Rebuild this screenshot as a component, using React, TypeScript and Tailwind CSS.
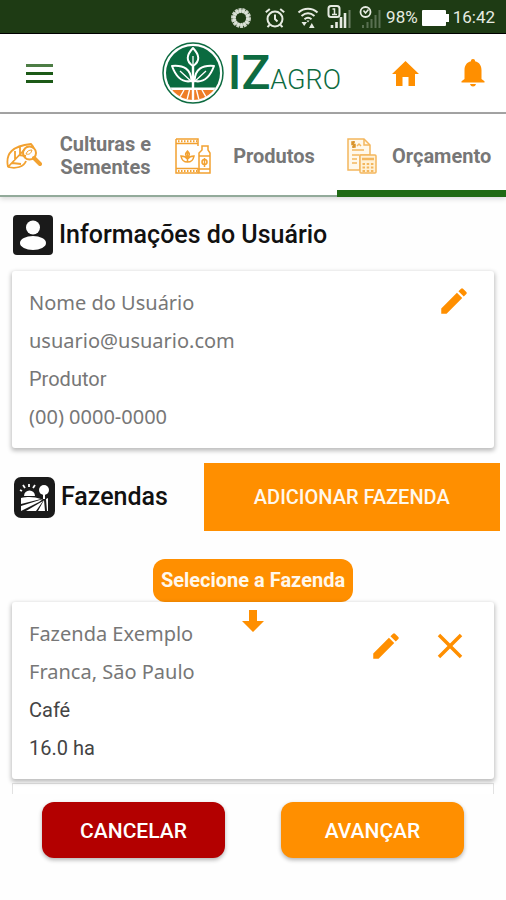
import React from "react";
import { MdEdit, MdClose } from "react-icons/md";

function StatusBar() {
  return (
    <div className="flex h-[34px] items-center justify-end border-b border-black bg-[#1e3b14] pt-[2px] pr-[11px] text-[#e6ebe2]">
      <svg className="mr-[10px] size-6" viewBox="0 0 24 24" fill="none" stroke="currentColor">
        <circle cx="12" cy="12" r="7.5" strokeWidth="5" strokeDasharray="2.6 0.7" opacity="0.85" />
        <circle cx="12" cy="12" r="7" strokeWidth="3" opacity="0.7" />
      </svg>
      <svg className="mr-[10px] size-6" viewBox="0 0 24 24" fill="none" stroke="currentColor" strokeWidth="2">
        <circle cx="12" cy="13" r="7.5" />
        <path d="M12 8.5V13l2.5 2.5M2.8 6.2l4-3.3M21.2 6.2l-4-3.3M6.5 19l-2 2.2M17.500 19l2 2.200" />
      </svg>
      <svg className="mr-2 h-6 w-[22px]" viewBox="0 0 22 24" fill="none" stroke="currentColor" strokeWidth="2">
        <path d="M1.500 6.500C7 1.500 15 1.500 20.500 6.500M4.500 10c4-3.400 9-3.400 13 0M7.500 13.200c2.200-1.800 4.800-1.800 7 0" />
        <path d="M4.500 16h5.500l-2.800 4zM12 22l2.800-5 2.800 5zM9.500 14.500h3L11 16.500z" fill="currentColor" stroke="none" />
      </svg>
      <svg className="mr-2 h-[26px] w-6" viewBox="0 0 24 26" fill="none" stroke="currentColor">
        <rect x="1.500" y="1" width="11" height="11" rx="2.500" strokeWidth="2" />
        <path d="M5.500 4h2v5M5 9.500h5" strokeWidth="1.500" />
        <path d="M5 23v-3M9.500 23v-6M14 23V12M18 23V8" strokeWidth="2.600" />
        <path d="M22.500 23V5" strokeWidth="2" opacity="0.4" />
      </svg>
      <svg className="mr-[5px] h-[26px] w-[22px]" viewBox="0 0 22 26" fill="none" stroke="currentColor">
        <circle cx="6.500" cy="7" r="5" strokeWidth="1.800" />
        <path d="M4.500 5.500L6.500 8l3-3.500" strokeWidth="1.600" />
        <path d="M4 23v-3M8.500 23v-6M12.500 23V14M16.500 23v-13M20.500 23V5" strokeWidth="2" opacity="0.3" />
      </svg>
      <span className="mr-1 text-[17px]">98%</span>
      <svg className="mr-1 h-4 w-[27px]" viewBox="0 0 27 16" fill="#fff">
        <rect width="24" height="16" rx="1" />
        <rect x="24" y="4" width="3" height="8" />
      </svg>
      <span className="text-[17px]">16:42</span>
    </div>
  );
}

function Logo() {
  return (
    <div className="flex items-center gap-1">
      <svg className="size-[62px]" viewBox="0 0 62 62">
        <defs>
          <clipPath id="logo-disc">
            <circle cx="31" cy="31" r="27" />
          </clipPath>
        </defs>
        <circle cx="31" cy="31" r="30" fill="#fff" stroke="#0d6b41" strokeWidth="1.500" />
        <g clipPath="url(#logo-disc)">
          <rect width="62" height="48" fill="#0a6b40" />
          <rect y="45.500" width="62" height="2.500" fill="#fff" />
          <rect y="48" width="62" height="14" fill="#ee7d27" />
          <path d="M22 48L14 62M27.500 48L24 62M34.500 48L38 62M40 48l8 14" stroke="#fff" strokeWidth="1.400" />
          <path d="M31 58V22" stroke="#fff" strokeWidth="2.400" />
          <g fill="#0a6b40" stroke="#fff" strokeWidth="2" strokeLinejoin="round">
            <path d="M31 24c-7.500-5-6.500-11 0-18 6.500 7 7.500 13 0 18z" />
            <path d="M29.500 39C20 41 14 35 10 24c12-1 19 3 19.500 15z" />
            <path d="M32.500 39c9.500 2 15.500-4 19.500-15-12-1-19 3-19.500 15z" />
          </g>
          <path d="M31 26V14M30 40L18 29M32 40l12-11" stroke="#fff" strokeWidth="1.300" fill="none" />
        </g>
      </svg>
      <div className="flex items-baseline leading-none text-[#0d6b41]">
        <span className="text-5xl font-medium">IZ</span>
        <span className="text-[27px] font-light">AGRO</span>
      </div>
    </div>
  );
}

function Home() {
  return (
    <svg className="h-[25px] w-[27px]" viewBox="0 0 27 25" fill="#ff8f00">
      <path d="M13.500 0L27 13h-4v12h-6.500v-9h-6v9H4V13H0z" />
    </svg>
  );
}

function Bell() {
  return (
    <svg className="h-7 w-6" viewBox="0 0 24 28" fill="#ff8f00">
      <path d="M12 0a2 2 0 0 1 2 2.300c4.500 1 6.500 4.500 6.500 9V20l3 2.200V23.500H.5v-1.300l3-2.200v-8.700c0-4.500 2-8 6.500-9A2 2 0 0 1 12 0zM9 25h6c-.5 1.700-1.500 2.500-3 2.500S9.500 26.700 9 25z" />
    </svg>
  );
}

function SeedIcon() {
  return (
    <svg className="h-7 w-9 shrink-0" viewBox="0 0 36 28" fill="none" stroke="#f2a130" strokeWidth="1.800" strokeLinejoin="round">
      <path d="M2 25C-1 11 7 4 25 2c1 1 2 2 3 5M2 25c8 2 16 0 18-6M2 25L19 7M9 18V9M13 13l7 1M6 21l9 1M14 12V5" />
      <circle cx="23.500" cy="11" r="6.500" strokeWidth="2" />
      <path d="M28 16l6 6" strokeWidth="4" strokeLinecap="round" />
      <path d="M20 12c1-3 3-4 6-4-1 3-2 5-6 4z" strokeWidth="1" />
    </svg>
  );
}

function ProductsIcon() {
  return (
    <svg className="h-9 w-9 shrink-0" viewBox="0 0 36 36" fill="none" stroke="#f2a130" strokeWidth="1.500">
      <path d="M1 1h22v7M23 30v5H1V1M1 5.500h22M1 30.500h22" />
      <path d="M3 3.200h19M3 33h19" strokeDasharray="1.500 1.500" strokeWidth="2" />
      <path d="M12.500 24V15M6 18c1 5 3 6 6.500 6S18 23 19 18c-3 0-5 1-6.500 3C11 19 9 18 6 18zM12.500 13c-3 3-2 5 0 6 2-1 3-3 0-6z" />
      <path d="M27 12V8h6v4l2 3v20H24V15zM24 18h11M24 31h11" />
      <circle cx="29.500" cy="24" r="2.500" />
      <path d="M29.500 20v9" />
    </svg>
  );
}

function BudgetIcon() {
  return (
    <svg className="h-9 w-[30px] shrink-0" viewBox="0 0 30 36" fill="none" stroke="#f4b75e" strokeWidth="1.500">
      <path d="M1 1h16l6 6v10H13v15H1z" fill="#fff8ea" />
      <path d="M17 1v6h6M5 12h12M5 17h7M5 21h5M5 25h5M10 8l2-2 2 2" />
      <path d="M8 4H5v2.500h3V9H5M6.500 3v7" stroke="#d9942b" />
      <rect x="13" y="17" width="16" height="18" rx="1" fill="#fff1d6" />
      <path d="M15 21h12" strokeWidth="2.500" />
      <path d="M15.500 26h11M15.500 29.500h11M15.500 33h11" strokeDasharray="2.500 1.700" strokeWidth="2" />
    </svg>
  );
}

function Tab({ icon, label, active }: { icon: React.ReactNode; label: string; active?: boolean }) {
  return (
    <button
      type="button"
      role="tab"
      aria-selected={!!active}
      className={
        "flex items-center border-b-[7px] pt-2 pl-[6px] " +
        (active ? "border-[#1f6a14]" : "border-transparent")
      }
    >
      {icon}
      <span className="flex-1 text-center text-[20px] leading-[23px] font-bold text-[#777]">{label}</span>
    </button>
  );
}

function UserBadge() {
  return (
    <svg className="size-10" viewBox="0 0 40 40">
      <rect width="40" height="40" rx="4" fill="#1a1a1a" />
      <circle cx="20" cy="12.500" r="7" fill="#fff" />
      <ellipse cx="20" cy="28" rx="13" ry="7" fill="#fff" />
    </svg>
  );
}

function FarmBadge() {
  return (
    <svg className="size-[41px]" viewBox="0 0 41 41">
      <rect width="41" height="41" rx="7" fill="#1a1a1a" />
      <g fill="#fff">
        <path d="M10 19a5.500 5.500 0 0 1 11 0z" />
        <circle cx="30" cy="13" r="5" />
        <path d="M29 16h2v6h-2z" />
        <path d="M7 21c8-2 14-1 20 1L7 27zM7 29l22-7-4 3L7 34zM12 34l17-10-7 10zM24 34l6-11 1 11zM33 34l-1-12 2-1v13z" />
      </g>
      <path d="M8 14l-2-1M11 11L9 8M15 10V7M19 11l2-3" stroke="#fff" strokeWidth="1.800" />
    </svg>
  );
}

const cardClass =
  "relative mx-3 rounded-[3px] bg-white pt-[13px] pb-3 pl-[17px] shadow-[0_2px_4px_1px_rgba(0,0,0,0.25)]";
const lineClass = "text-xl leading-[38px]";
const lightLine = "font-['Noto_Sans',sans-serif] text-[#777]";
const headingClass = "flex items-center gap-[6px] text-[25px] leading-10 font-medium text-[#111]";
const iconButton = "flex size-8 items-center justify-center text-[#ff8f00]";

export default function App() {
  return (
    <div className="flex min-h-screen flex-col bg-[#fefefe] font-[Roboto,sans-serif]">
      <StatusBar />
      <header className="flex h-20 items-center justify-between border-b-2 border-[#a5a5a5] bg-white pr-[21px] pl-[26px]">
        <button type="button" aria-label="Menu" className="flex w-[27px] flex-col gap-[5px]">
          <span className="h-[3px] bg-[#4d7d45]" />
          <span className="h-[3px] bg-[#1c5a17]" />
          <span className="h-[3px] bg-[#1c5a17]" />
        </button>
        <div className="flex items-center gap-[51px]">
          <Logo />
          <div className="flex items-center gap-[42px]">
            <button type="button" aria-label="Início">
              <Home />
            </button>
            <button type="button" aria-label="Notificações">
              <Bell />
            </button>
          </div>
        </div>
      </header>

      <nav role="tablist" className="grid h-[83px] grid-cols-3 bg-white shadow-[inset_0_-2px_0_#92aa9a,0_2px_5px_rgba(0,0,0,0.15)]">
        <Tab icon={<SeedIcon />} label="Culturas e Sementes" />
        <Tab icon={<ProductsIcon />} label="Produtos" />
        <Tab
          icon={
            <span className="pl-1">
              <BudgetIcon />
            </span>
          }
          label="Orçamento"
          active
        />
      </nav>

      <main className="flex flex-col">
        <h2 className={headingClass + " mt-[18px] pl-[13px]"}>
          <UserBadge />
          Informações do Usuário
        </h2>

        <section className={cardClass + " mt-4"}>
          <p className={lineClass + " " + lightLine}>Nome do Usuário</p>
          <p className={lineClass + " " + lightLine}>usuario@usuario.com</p>
          <p className={lineClass + " text-[#777]"}>Produtor</p>
          <p className={lineClass + " " + lightLine}>(00) 0000-0000</p>
          <button type="button" aria-label="Editar usuário" className={iconButton + " absolute top-[14px] right-6"}>
            <MdEdit size={34} className="shrink-0" />
          </button>
        </section>

        <div className="mt-[15px] flex items-center justify-between pr-[6px] pl-[14px]">
          <h2 className={headingClass}>
            <FarmBadge />
            Fazendas
          </h2>
          <button type="button" className="h-[68px] w-[61%] bg-[#ff8f00] text-xl font-medium text-[#fff8ec]">
            ADICIONAR FAZENDA
          </button>
        </div>

        <button
          type="button"
          className="mt-7 self-center rounded-xl bg-[#ff8f00] px-2 py-[10px] text-[20px] leading-[23px] font-bold text-[#fff8ec]"
        >
          Selecione a Fazenda
        </button>

        <section className={cardClass}>
          <p className={lineClass + " " + lightLine}>Fazenda Exemplo</p>
          <p className={lineClass + " " + lightLine}>Franca, São Paulo</p>
          <p className={lineClass + " text-[#444]"}>Café</p>
          <p className={lineClass + " text-[#444]"}>16.0 ha</p>
          <svg className="absolute top-2 left-1/2 h-[22px] w-[22px] -translate-x-1/2" viewBox="0 0 22 22" fill="#ff8f00">
            <path d="M7 0h8v11h7L11 22 0 11h7z" />
          </svg>
          <div className="absolute top-7 right-7 flex gap-8">
            <button type="button" aria-label="Editar fazenda" className={iconButton}>
              <MdEdit size={34} className="shrink-0" />
            </button>
            <button type="button" aria-label="Remover fazenda" className={iconButton}>
              <MdClose size={42} className="shrink-0" />
            </button>
          </div>
        </section>

        <div className="mx-3 mt-1 h-[11px] border-x border-t border-[#e2e2e2] bg-white" />
      </main>

      <footer className="flex justify-between px-[42px] pt-2 pb-10 text-[21px] font-medium text-white">
        <button type="button" className="h-14 w-[183px] rounded-xl bg-[#b30000] pt-[3px] shadow-[0_2px_4px_rgba(0,0,0,0.3)]">
          CANCELAR
        </button>
        <button type="button" className="h-14 w-[183px] rounded-xl bg-[#ff8f00] pt-[3px] shadow-[0_2px_4px_rgba(0,0,0,0.3)]">
          AVANÇAR
        </button>
      </footer>
    </div>
  );
}
